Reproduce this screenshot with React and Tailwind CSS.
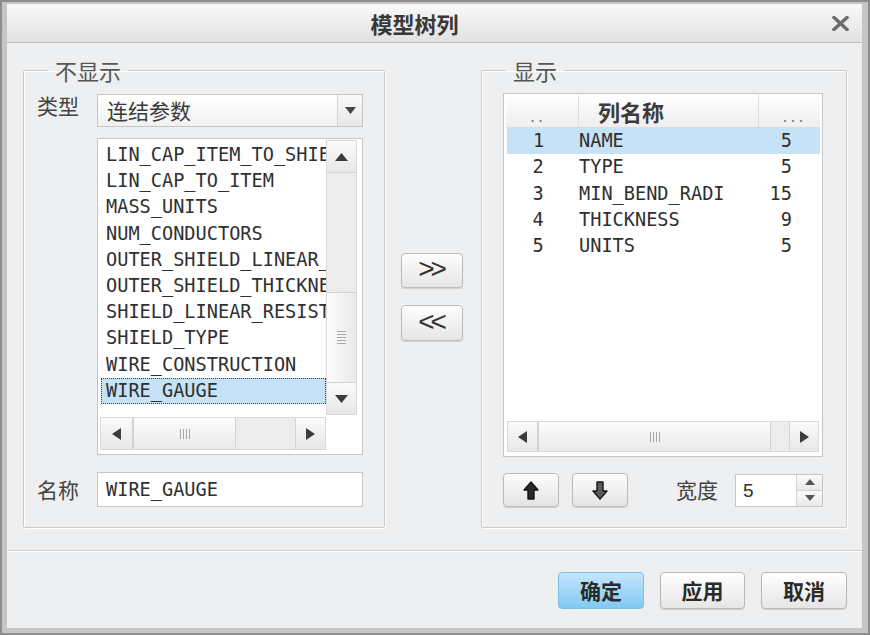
import React from "react";

const MONO = "font-['DejaVu_Sans_Mono',monospace] text-[18.6px] text-[#2f2f2f]";
const CJK = "font-['Noto_Sans_CJK_SC',sans-serif]";

function Tri({ dir, w = 10, h = 8, color = "#3c3c3c" }) {
  const pts = {
    up: `0,${h} ${w / 2},0 ${w},${h}`,
    down: `0,0 ${w / 2},${h} ${w},0`,
    left: `${w},0 0,${h / 2} ${w},${h}`,
    right: `0,0 ${w},${h / 2} 0,${h}`,
  }[dir];
  return (
    <svg width={w} height={h} viewBox={`0 0 ${w} ${h}`}>
      <polygon points={pts} fill={color} />
    </svg>
  );
}

function ArrowBtn({ dir, className = "" }) {
  const horiz = dir === "left" || dir === "right";
  return (
    <div
      className={`flex items-center justify-center bg-gradient-to-b from-[#fbfbfb] to-[#e7e7e7] border border-[#d3d3d3] ${className}`}
    >
      {horiz ? <Tri dir={dir} w={9} h={12} /> : <Tri dir={dir} w={13} h={8} />}
    </div>
  );
}

function VGrip() {
  return (
    <div className="flex flex-col gap-[2px]">
      <div className="w-[9px] h-[1px] bg-[#a8a8a8]" />
      <div className="w-[9px] h-[1px] bg-[#a8a8a8]" />
      <div className="w-[9px] h-[1px] bg-[#a8a8a8]" />
      <div className="w-[9px] h-[1px] bg-[#a8a8a8]" />
      <div className="w-[9px] h-[1px] bg-[#a8a8a8]" />
    </div>
  );
}

function HGrip() {
  return (
    <div className="flex gap-[2px]">
      <div className="w-[1px] h-[10px] bg-[#a8a8a8]" />
      <div className="w-[1px] h-[10px] bg-[#a8a8a8]" />
      <div className="w-[1px] h-[10px] bg-[#a8a8a8]" />
      <div className="w-[1px] h-[10px] bg-[#a8a8a8]" />
    </div>
  );
}

function BlockArrow({ dir }) {
  const up = "8,1 15,9 11,9 11,18 5,18 5,9 1,9";
  const down = "8,18 15,10 11,10 11,1 5,1 5,10 1,10";
  return (
    <svg width="16" height="19" viewBox="0 0 16 19">
      <polygon
        points={dir === "up" ? up : down}
        fill={dir === "up" ? "#2a2a2a" : "#5c5c5c"}
        stroke="#151515"
        strokeWidth="1.4"
        strokeLinejoin="round"
      />
    </svg>
  );
}

const leftItems = [
  "LIN_CAP_ITEM_TO_SHIELD",
  "LIN_CAP_TO_ITEM",
  "MASS_UNITS",
  "NUM_CONDUCTORS",
  "OUTER_SHIELD_LINEAR_RESIST",
  "OUTER_SHIELD_THICKNESS",
  "SHIELD_LINEAR_RESISTANCE",
  "SHIELD_TYPE",
  "WIRE_CONSTRUCTION",
  "WIRE_GAUGE",
];

const rows = [
  ["1", "NAME", "5"],
  ["2", "TYPE", "5"],
  ["3", "MIN_BEND_RADI", "15"],
  ["4", "THICKNESS", "9"],
  ["5", "UNITS", "5"],
];

export default function App() {
  return (
    <div className="w-[870px] h-[635px] bg-[#8d8d8d] p-[2px]">
      <div className="w-full h-full bg-[#c6c6c6] pt-[2px] pl-[5px] pr-[6px] pb-[5px] flex flex-col">
        {/* Title bar */}
        <div className="h-[39px] shrink-0 flex items-center border-b border-[#bdbdbd] bg-gradient-to-b from-[#f9f9f9] to-[#e2e2e2]">
          <div className={`flex-1 text-center text-[22px] font-bold text-[#383838] ${CJK}`}>模型树列</div>
          <div className="w-[40px] flex justify-center pr-[4px]">
            <svg width="17" height="15" viewBox="0 0 17 15">
              <path d="M2 1.5 L15 13.5 M15 1.5 L2 13.5" stroke="#6c6c6c" strokeWidth="3.4" strokeLinecap="square" />
            </svg>
          </div>
        </div>

        {/* Body */}
        <div className="flex-1 bg-[#eeeff0] flex flex-col">
          <div className="flex pl-[16px] pr-[15px] pt-[13px]">
            {/* Left group */}
            <fieldset className="w-[362px] h-[472px] border border-[#cacaca] rounded-[2px] shadow-[inset_1px_1px_0_#ffffff,1px_1px_0_#ffffff]">
              <legend className={`ml-[24px] px-[7px] text-[22px] leading-[28px] text-[#555555] ${CJK}`}>不显示</legend>
              <div className="pl-[13px] pt-[10px] grid grid-cols-[60px_266px]">
                <div className={`text-[21px] leading-[22px] text-[#444444] ${CJK}`}>类型</div>
                <div className="h-[33px] border border-[#c6c6c6] bg-gradient-to-b from-[#ffffff] to-[#f1f1f1] flex">
                  <div className={`flex-1 pl-[9px] text-[21px] leading-[31px] text-[#3a3a3a] ${CJK}`}>连结参数</div>
                  <div className="w-[25px] border-l border-[#d4d4d4] bg-gradient-to-b from-[#fafafa] to-[#e8e8e8] flex items-center justify-center">
                    <Tri dir="down" w={11} h={7} color="#444444" />
                  </div>
                </div>

                <div />
                <div className="mt-[11px] h-[317px] border border-[#c6c6c6] bg-white pl-[2px] pt-[1px] grid grid-cols-[226px_31px] grid-rows-[275px_35px]">
                  <div className={`overflow-hidden pt-[2px] ${MONO}`}>
                    {leftItems.map((t, i) =>
                      i === leftItems.length - 1 ? (
                        <div
                          key={t}
                          className="ml-[1px] h-[26.2px] leading-[24px] pl-[4px] whitespace-nowrap overflow-hidden bg-[#c6e2f6] border border-dotted border-[#3a3a3a]"
                        >
                          {t}
                        </div>
                      ) : (
                        <div key={t} className="h-[26.2px] leading-[26px] pl-[6px] whitespace-nowrap overflow-hidden">
                          {t}
                        </div>
                      )
                    )}
                  </div>
                  <div className="flex flex-col bg-[#ebebeb] border border-[#dadada]">
                    <ArrowBtn dir="up" className="h-[32px] border-0 border-b" />
                    <div className="h-[119px] bg-[#ececec]" />
                    <div className="h-[91px] bg-gradient-to-r from-[#fdfdfd] to-[#e9e9e9] border-y border-[#d2d2d2] flex items-center justify-center">
                      <VGrip />
                    </div>
                    <ArrowBtn dir="down" className="flex-1 border-0" />
                  </div>
                  <div className="mt-[2px] h-[33px] flex bg-[#ebebeb] border border-[#dadada]">
                    <ArrowBtn dir="left" className="w-[32px] border-0 border-r" />
                    <div className="w-[103px] bg-gradient-to-b from-[#fdfdfd] to-[#e9e9e9] border-x border-[#d2d2d2] flex items-center justify-center">
                      <HGrip />
                    </div>
                    <div className="flex-1 bg-[#ececec]" />
                    <ArrowBtn dir="right" className="w-[30px] border-0 border-l" />
                  </div>
                  <div />
                </div>

                <div className={`mt-[17px] text-[21px] leading-[35px] text-[#444444] ${CJK}`}>名称</div>
                <div className={`mt-[17px] h-[35px] border border-[#c6c6c6] bg-white pl-[8px] leading-[33px] ${MONO}`}>
                  WIRE_GAUGE
                </div>
              </div>
            </fieldset>

            {/* Middle buttons */}
            <div className="w-[96px] pl-[16px] pt-[197px] flex flex-col gap-[17px]">
              <div className="w-[62px] h-[35px] rounded-[4px] border border-[#bcbcbc] bg-gradient-to-b from-[#fdfdfd] to-[#e6e6e6] shadow-[0_1px_1px_#d0d0d0] flex items-center justify-center font-['Liberation_Sans',sans-serif] text-[28px] leading-none tracking-[-4px] text-[#333333] pb-[3px] pr-[3px]">
                &gt;&gt;
              </div>
              <div className="w-[62px] h-[36px] rounded-[4px] border border-[#bcbcbc] bg-gradient-to-b from-[#fdfdfd] to-[#e6e6e6] shadow-[0_1px_1px_#d0d0d0] flex items-center justify-center font-['Liberation_Sans',sans-serif] text-[28px] leading-none tracking-[-4px] text-[#333333] pb-[3px] pr-[3px]">
                &lt;&lt;
              </div>
            </div>

            {/* Right group */}
            <fieldset className="w-[366px] h-[472px] border border-[#cacaca] rounded-[2px] shadow-[inset_1px_1px_0_#ffffff,1px_1px_0_#ffffff]">
              <legend className={`ml-[24px] px-[7px] text-[22px] leading-[28px] text-[#555555] ${CJK}`}>显示</legend>
              <div className="pl-[21px] pt-[9px]">
                <div className="w-[320px] h-[364px] border border-[#c6c6c6] bg-white pt-[1px] px-[2px] pb-[4px] flex flex-col">
                  <div className="h-[33px] flex bg-gradient-to-b from-[#ffffff] to-[#eeeeee] border-b border-[#dcdcdc]">
                    <div className="w-[72px] text-center pr-[8px] pt-[8px] font-['Liberation_Sans',sans-serif] text-[18px] text-[#777777] tracking-[3px]">..</div>
                    <div className={`w-[180px] border-l border-[#dedede] pl-[19px] pt-[1px] text-[22px] font-bold text-[#3c3c3c] leading-[30px] ${CJK}`}>列名称</div>
                    <div className="flex-1 border-l border-[#dedede] text-center pt-[8px] pl-[10px] font-['Liberation_Sans',sans-serif] text-[18px] text-[#777777] tracking-[3px]">...</div>
                  </div>
                  <div className={`flex-1 ${MONO}`}>
                    {rows.map((r, i) => (
                      <div key={r[0]} className={`h-[26.25px] flex leading-[26px] ${i === 0 ? "bg-[#c6e2f6] ml-[1px]" : ""}`}>
                        <div className={`${i === 0 ? "w-[71px]" : "w-[72px]"} text-center pr-[8px]`}>{r[0]}</div>
                        <div className="w-[180px] pl-[1px]">{r[1]}</div>
                        <div className="flex-1 text-right pr-[28px]">{r[2]}</div>
                      </div>
                    ))}
                  </div>
                  <div className="mx-[1px] h-[31px] flex bg-[#ebebeb] border border-[#dadada]">
                    <ArrowBtn dir="left" className="w-[30px] border-0 border-r" />
                    <div className="w-[233px] bg-gradient-to-b from-[#fdfdfd] to-[#e9e9e9] border-x border-[#d2d2d2] flex items-center justify-center">
                      <HGrip />
                    </div>
                    <div className="flex-1 bg-[#ececec]" />
                    <ArrowBtn dir="right" className="w-[29px] border-0 border-l" />
                  </div>
                </div>

                <div className="w-[320px] mt-[16px] h-[34px] flex items-center">
                  <div className="w-[56px] h-[34px] rounded-[4px] border border-[#bcbcbc] bg-gradient-to-b from-[#fdfdfd] to-[#e4e4e4] shadow-[0_1px_1px_#d0d0d0] flex items-center justify-center">
                    <BlockArrow dir="up" />
                  </div>
                  <div className="ml-[13px] w-[56px] h-[34px] rounded-[4px] border border-[#bcbcbc] bg-gradient-to-b from-[#fdfdfd] to-[#e4e4e4] shadow-[0_1px_1px_#d0d0d0] flex items-center justify-center">
                    <BlockArrow dir="down" />
                  </div>
                  <div className={`ml-auto text-[21px] text-[#444444] ${CJK}`}>宽度</div>
                  <div className="ml-[17px] w-[88px] h-[33px] flex border border-[#c6c6c6] bg-white">
                    <div className="flex-1 pl-[7px] font-['Liberation_Sans',sans-serif] text-[19px] leading-[31px] text-[#333333]">5</div>
                    <div className="w-[26px] flex flex-col border-l border-[#d4d4d4]">
                      <div className="flex-1 flex items-center justify-center bg-gradient-to-b from-[#fbfbfb] to-[#e8e8e8] border-b border-[#d0d0d0]">
                        <Tri dir="up" w={10} h={6} color="#555555" />
                      </div>
                      <div className="flex-1 flex items-center justify-center bg-gradient-to-b from-[#fbfbfb] to-[#e8e8e8]">
                        <Tri dir="down" w={10} h={6} color="#555555" />
                      </div>
                    </div>
                  </div>
                </div>
              </div>
            </fieldset>
          </div>

          {/* Separator */}
          <div className="mt-[22px] border-t border-[#d3d3d3] border-b border-b-[#ffffff]" />

          {/* Bottom buttons */}
          <div className="mt-[20px] flex justify-end pr-[15px] gap-[16px]">
            <div className={`w-[86px] h-[37px] rounded-[4px] border border-[#7fbce6] bg-gradient-to-b from-[#c4e6fb] to-[#80c9f2] flex items-center justify-center text-[21px] font-bold text-[#2a2a2a] ${CJK}`}>确定</div>
            <div className={`w-[85px] h-[37px] rounded-[4px] border border-[#b8b8b8] bg-gradient-to-b from-[#ffffff] to-[#e6e6e6] shadow-[0_1px_1px_#d0d0d0] flex items-center justify-center text-[21px] font-bold text-[#2a2a2a] ${CJK}`}>应用</div>
            <div className={`w-[86px] h-[37px] rounded-[4px] border border-[#b8b8b8] bg-gradient-to-b from-[#ffffff] to-[#e6e6e6] shadow-[0_1px_1px_#d0d0d0] flex items-center justify-center text-[21px] font-bold text-[#2a2a2a] ${CJK}`}>取消</div>
          </div>
        </div>
      </div>
    </div>
  );
}
